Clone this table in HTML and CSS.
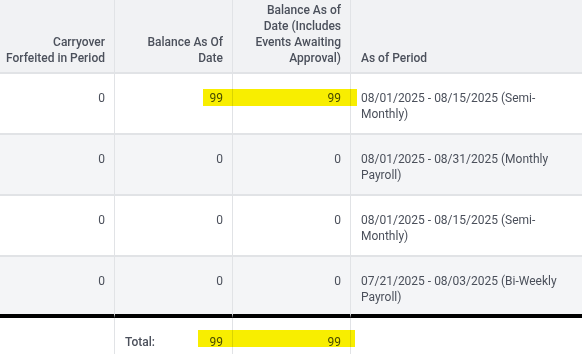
FILE: index.html
```html
<!DOCTYPE html>
<html>
<head>
<meta charset="utf-8">
<link rel="stylesheet" href="styles.css">
</head>
<body>
<div class="wrap">
  <table class="grid">
    <colgroup>
      <col class="c1"><col class="c2"><col class="c3"><col class="c4">
    </colgroup>
    <thead>
      <tr class="head">
        <th class="num first">Carryover Forfeited in Period</th>
        <th class="num">Balance As Of Date</th>
        <th class="num">Balance As of Date (Includes Events Awaiting Approval)</th>
        <th class="txt">As of Period</th>
      </tr>
    </thead>
    <tbody>
      <tr class="row">
        <td class="num">0</td>
        <td class="num">99</td>
        <td class="num">99</td>
        <td class="txt">08/01/2025 - 08/15/2025 (Semi-Monthly)</td>
      </tr>
      <tr class="row alt">
        <td class="num">0</td>
        <td class="num">0</td>
        <td class="num">0</td>
        <td class="txt">08/01/2025 - 08/31/2025 (Monthly Payroll)</td>
      </tr>
      <tr class="row">
        <td class="num">0</td>
        <td class="num">0</td>
        <td class="num">0</td>
        <td class="txt">08/01/2025 - 08/15/2025 (Semi-Monthly)</td>
      </tr>
      <tr class="row alt last">
        <td class="num">0</td>
        <td class="num">0</td>
        <td class="num">0</td>
        <td class="txt">07/21/2025 - 08/03/2025 (Bi-Weekly Payroll)</td>
      </tr>
    </tbody>
    <tfoot>
      <tr class="total">
        <td></td>
        <td><div class="split"><span class="lbl">Total:</span><span>99</span></div></td>
        <td class="num">99</td>
        <td></td>
      </tr>
    </tfoot>
  </table>
  <div class="mark mark-row"></div>
  <div class="mark mark-total"></div>
</div>
</body>
</html>
```

FILE: styles.css
```css
html, body {
  margin: 0;
  padding: 0;
  background: #ffffff;
}
body {
  width: 582px;
  height: 354px;
  overflow: hidden;
  font-family: Roboto, "Liberation Sans", sans-serif;
  font-size: 12px;
  line-height: 16px;
  color: #4b505b;
}
.wrap {
  position: relative;
  width: 582px;
}
.grid {
  table-layout: fixed;
  border-collapse: separate;
  border-spacing: 0;
  width: 582px;
}
.c1 { width: 115px; }
.c2 { width: 118px; }
.c3 { width: 118px; }
.c4 { width: 231px; }

.grid th, .grid td {
  padding: 0 9px 0 10px;
  border-right: 1px solid #e1e3e6;
}
.grid th:last-child, .grid td:last-child {
  border-right: none;
}
.num { text-align: right; }
.txt { text-align: left; }

.head { height: 74px; }
.head th {
  background: #f1f2f4;
  font-weight: 500;
  vertical-align: bottom;
  padding-bottom: 6px;
  border-bottom: 2px solid #e1e3e6;
}
.head th.first { padding-left: 2px; }
.row { height: 61px; }
.row td {
  vertical-align: top;
  padding-top: 16px;
  background: #ffffff;
  border-bottom: 2px solid #e1e3e6;
}
.row.alt td { background: #f4f5f7; }
.row.last td {
  border-bottom: 4px solid #000000;
}
.total { height: 40px; }
.total td {
  vertical-align: top;
  padding-top: 16px;
}
.split {
  display: flex;
  justify-content: space-between;
}
.lbl { font-weight: 500; }

.mark {
  position: absolute;
  background: #f8ee00;
  mix-blend-mode: multiply;
}
.mark-row {
  left: 203px;
  top: 89px;
  width: 154px;
  height: 17px;
}
.mark-total {
  left: 198px;
  top: 330px;
  width: 157px;
  height: 17px;
}
```
